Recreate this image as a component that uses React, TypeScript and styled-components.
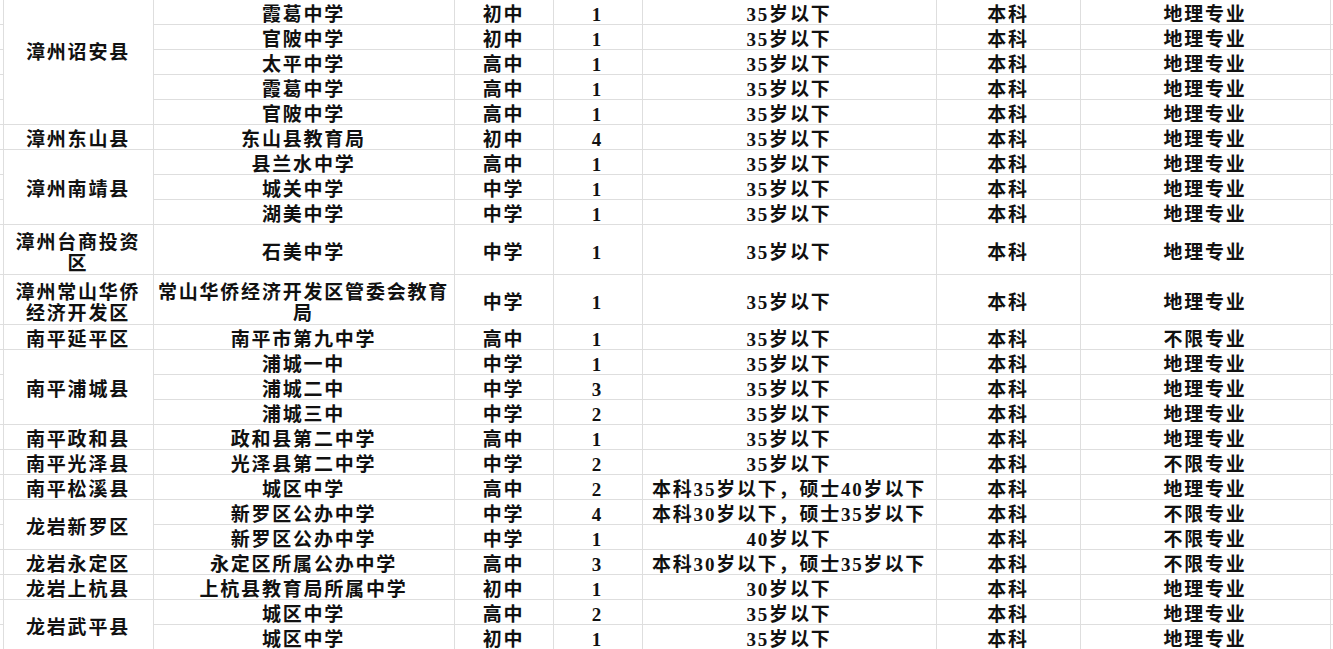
import React from 'react'
import styled, { createGlobalStyle } from 'styled-components'

type Post = {
    school: string
    level: string
    count: number
    age: string
    degree: string
    major: string
    tall?: boolean
}

type Region = {
    name: string
    posts: Post[]
    // merged cell continues above the visible area, so its label sits higher
    lift?: number
}

const A35 = '35岁以下'
const GEO = '地理专业'
const ANY = '不限专业'

const post = (school: string, level: string, count: number, age = A35, major = GEO, tall = false): Post => ({
    school,
    level,
    count,
    age,
    degree: '本科',
    major,
    tall,
})

const regions: Region[] = [
    {
        name: '漳州诏安县',
        lift: 25,
        posts: [
            post('霞葛中学', '初中', 1),
            post('官陂中学', '初中', 1),
            post('太平中学', '高中', 1),
            post('霞葛中学', '高中', 1),
            post('官陂中学', '高中', 1),
        ],
    },
    { name: '漳州东山县', posts: [post('东山县教育局', '初中', 4)] },
    {
        name: '漳州南靖县',
        posts: [
            post('县兰水中学', '高中', 1),
            post('城关中学', '中学', 1),
            post('湖美中学', '中学', 1),
        ],
    },
    { name: '漳州台商投资区', posts: [post('石美中学', '中学', 1, A35, GEO, true)] },
    {
        name: '漳州常山华侨经济开发区',
        posts: [post('常山华侨经济开发区管委会教育局', '中学', 1, A35, GEO, true)],
    },
    { name: '南平延平区', posts: [post('南平市第九中学', '高中', 1, A35, ANY)] },
    {
        name: '南平浦城县',
        posts: [
            post('浦城一中', '中学', 1),
            post('浦城二中', '中学', 3),
            post('浦城三中', '中学', 2),
        ],
    },
    { name: '南平政和县', posts: [post('政和县第二中学', '高中', 1)] },
    { name: '南平光泽县', posts: [post('光泽县第二中学', '中学', 2, A35, ANY)] },
    { name: '南平松溪县', posts: [post('城区中学', '高中', 2, '本科35岁以下，硕士40岁以下')] },
    {
        name: '龙岩新罗区',
        posts: [
            post('新罗区公办中学', '中学', 4, '本科30岁以下，硕士35岁以下', ANY),
            post('新罗区公办中学', '中学', 1, '40岁以下', ANY),
        ],
    },
    { name: '龙岩永定区', posts: [post('永定区所属公办中学', '高中', 3, '本科30岁以下，硕士35岁以下', ANY)] },
    { name: '龙岩上杭县', posts: [post('上杭县教育局所属中学', '初中', 1, '30岁以下')] },
    {
        name: '龙岩武平县',
        posts: [post('城区中学', '高中', 2), post('城区中学', '初中', 1)],
    },
]

// column widths, left and right edges are the cut-off neighbour columns
const widths = [3, 150, 301, 99, 89, 294, 144, 250, 3]

export default function App(): JSX.Element {
    return (
        <>
            <GlobalStyle />
            <Page>
                <Sheet>
                    <colgroup>
                        {widths.map((w, i) => (
                            <col key={i} style={{ width: w }} />
                        ))}
                    </colgroup>
                    <tbody>
                        {regions.map((region) =>
                            region.posts.map((p, i) => (
                                <Row key={region.name + i} $tall={p.tall}>
                                    <Edge $side="left" />
                                    {i === 0 && (
                                        <Cell rowSpan={region.posts.length} $lift={region.lift}>
                                            {region.name}
                                        </Cell>
                                    )}
                                    <Cell>{p.school}</Cell>
                                    <Cell>{p.level}</Cell>
                                    <Cell>{p.count}</Cell>
                                    <Cell>{p.age}</Cell>
                                    <Cell>{p.degree}</Cell>
                                    <Cell>{p.major}</Cell>
                                    <Edge $side="right" />
                                </Row>
                            ))
                        )}
                    </tbody>
                </Sheet>
            </Page>
        </>
    )
}

const GlobalStyle = createGlobalStyle`
    html, body {
        margin: 0;
        padding: 0;
        background: #ffffff;
        overflow: hidden;
    }
`

const Page = styled.div`
    width: 1333px;
    height: 649px;
    overflow: hidden;
    background: #ffffff;
`

const Sheet = styled.table`
    border-collapse: collapse;
    table-layout: fixed;
    width: 1333px;
    margin-top: -1px;
    font-family: 'Liberation Serif', 'Noto Sans CJK SC', serif;
    font-weight: 700;
    font-size: 19px;
    color: #111111;
`

const Cell = styled.td<{ $lift?: number }>`
    border: 1px solid #dedede;
    padding: 5px 3px ${(p) => p.$lift ?? 0}px;
    line-height: 19px;
    letter-spacing: 1.8px;
    text-align: center;
    vertical-align: middle;
    white-space: normal;
    word-break: break-all;
    overflow: hidden;
`

const Row = styled.tr<{ $tall?: boolean }>`
    height: ${(p) => (p.$tall ? '50px' : '25px')};

    & > ${Cell} {
        padding-top: ${(p) => (p.$tall ? '6px' : '5px')};
        line-height: ${(p) => (p.$tall ? '21px' : '19px')};
    }
`

const Edge = styled.td<{ $side: 'left' | 'right' }>`
    padding: 0;
    border-top: 1px solid #dedede;
    border-bottom: 1px solid #dedede;
    border-${(p) => p.$side}: none;
`
